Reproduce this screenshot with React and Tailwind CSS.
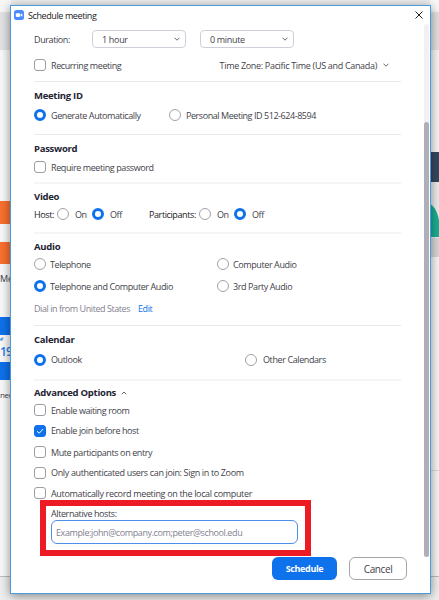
import React from "react";

const font = "font-['Open_Sans','Noto_Sans',sans-serif]";

function T({ className = "", children }) {
  return <span className={`whitespace-nowrap ${className}`}>{children}</span>;
}

function Line({ className = "h-px bg-[#e9e9ed]" }) {
  return <div className={`w-[367px] shrink-0 ${className}`} />;
}

function Row({ className = "", children }) {
  return <div className={`flex shrink-0 items-center ${className}`}>{children}</div>;
}

function Radio({ on, className = "" }) {
  return (
    <span
      className={`size-3 shrink-0 rounded-full bg-white ${
        on ? "border-[3px] border-[#0e72ed]" : "border border-[#a2a2a8]"
      } ${className}`}
    />
  );
}

function Check({ on }) {
  return (
    <span
      className={`flex size-3 shrink-0 items-center justify-center rounded-[3px] border ${
        on ? "border-[#0e72ed] bg-[#0e72ed]" : "border-[#9c9ca3] bg-white"
      }`}
    >
      {on && (
        <svg viewBox="0 0 10 10" className="size-[10px]" fill="none" stroke="white" strokeWidth="1">
          <path d="M2 5.2 4.2 7.2 8.2 3" />
        </svg>
      )}
    </span>
  );
}

function Chevron({ up }) {
  return (
    <svg viewBox="0 0 6 4" className="h-1 w-1.5 shrink-0" fill="none" stroke="#666672" strokeWidth="1">
      <path d={up ? "M.7 3.2 3 1 5.3 3.2" : "M.5.7 3 3.2 5.5.7"} />
    </svg>
  );
}

function Select({ label }) {
  return (
    <div className="flex h-[18px] w-[94px] items-center justify-between rounded-[4px] border border-[#cfcfdc] pr-[5px] pl-[9px]">
      <T className="tracking-[-0.32px]">{label}</T>
      <Chevron />
    </div>
  );
}

function Heading({ className, children }) {
  return (
    <div className={`flex shrink-0 items-center text-[9.5px] font-bold tracking-[-0.27px] text-[#232333] ${className}`}>
      <T>{children}</T>
    </div>
  );
}

function Backdrop() {
  return (
    <div className="h-[600px] w-[439px] bg-[#efefef] text-[#3c3c46]">
      <div className="flex h-[577px] justify-between border-b border-[#bdbdbd]">
        <div className="flex w-[11px] flex-col overflow-hidden bg-[#fafafa]">
          <div className="h-3 shrink-0 bg-[#f8f8f8]" />
          <div className="h-[38px] shrink-0 bg-[#e4e4e7]" />
          <div className="mt-[151px] h-[23px] shrink-0 bg-[#fa7130]" />
          <div className="mt-[18px] h-[22px] shrink-0 bg-[#fa7130]" />
          <div className="mt-[7px] h-4 shrink-0 text-[9px] leading-4">Me</div>
          <div className="mt-[30px] h-[18px] shrink-0 bg-[#0e72ed]" />
          <svg viewBox="0 0 11 8" className="-mt-px h-2 w-[11px] shrink-0" fill="none" stroke="#5aa0f4" strokeWidth="2">
            <path d="M0 5c1.500 1.500 2.500 .5 2.500-1.500" />
          </svg>
          <div className="mt-px h-[19px] shrink-0 text-[12px] leading-[17px] font-semibold tracking-[-0.8px] text-[#2a7fe6]">
            19
          </div>
          <div className="h-[18px] shrink-0 bg-[#0e72ed]" />
          <div className="mt-[7px] h-4 shrink-0 text-[8px] leading-4 tracking-[-0.3px]">ned</div>
        </div>
        <div className="flex w-[9px] flex-col bg-[#f6f6f6]">
          <div className="h-3 shrink-0 bg-[#f8f8f8]" />
          <div className="h-[38px] shrink-0 bg-[#e2e2e4]" />
          <div className="mt-[102px] h-[30px] shrink-0 bg-[#34495e]" />
          <svg viewBox="0 0 9 56" className="h-14 w-[9px] shrink-0">
            <path d="M0 0h9v56H0z" fill="#ececec" />
            <path d="M0 22c5 3 8 9 9 17v16H0z" fill="#1bae93" />
          </svg>
          <div className="h-[19px] shrink-0 bg-[#d8d8d8]" />
          <div className="mt-[213px] h-px shrink-0 bg-[#dadada]" />
        </div>
      </div>
    </div>
  );
}

export default function App() {
  return (
    <div className={`relative h-[600px] w-[439px] overflow-hidden ${font}`}>
      <Backdrop />
      <div className="absolute top-[5px] left-[10px] flex h-[589px] w-[421px] flex-col border border-[#4a9ade] bg-white text-[9px] leading-none tracking-[-0.4px] text-[#3f3f4a] shadow-[0_2px_10px_rgba(0,0,0,0.45)]">
        <div className="flex h-[18px] shrink-0 items-center pr-[7px] pl-[3px]">
          <svg viewBox="0 0 10 10" className="size-[10px]">
            <rect width="10" height="10" rx="2.5" fill="#4a8cff" />
            <rect x="1.8" y="3.2" width="4.3" height="3.7" rx=".8" fill="white" />
            <path d="m6.5 4.5 1.8-1.1v3.3L6.5 5.6z" fill="white" />
          </svg>
          <T className="ml-[4px] text-[#222]">Schedule meeting</T>
          <svg viewBox="0 0 8 8" className="ml-auto size-2" fill="none" stroke="#222" strokeWidth="1">
            <path d="m.5.5 7 7m0-7-7 7" />
          </svg>
        </div>
        <div className="flex h-[569px]">
          <div className="flex w-[413px] flex-col pl-[23px]">
            <Row className="h-[30px]">
              <T className="w-[58px]">Duration:</T>
              <Select label="1 hour" />
              <span className="w-[14px]" />
              <Select label="0 minute" />
            </Row>
            <Row className="h-[22px] w-[367px]">
              <Check />
              <T className="ml-[5px]">Recurring meeting</T>
              <T className="mr-[6px] ml-auto tracking-[-0.32px]">Time Zone: Pacific Time (US and Canada)</T>
              <Chevron />
              <span className="w-[12px]" />
            </Row>
            <Line className="mt-[5px] h-px bg-[#e9e9ed]" />
            <Heading className="mt-[6px] h-4">Meeting ID</Heading>
            <Row className="mt-px h-5">
              <Radio on />
              <T className="ml-[5px] w-[118px]">Generate Automatically</T>
              <Radio />
              <T className="ml-[5px] tracking-[-0.44px]">Personal Meeting ID 512-624-8594</T>
            </Row>
            <Line className="mt-[9px] h-px bg-[#e9e9ed]" />
            <Heading className="mt-[6px] h-4">Password</Heading>
            <Row className="h-5">
              <Check />
              <T className="ml-[5px]">Require meeting password</T>
            </Row>
            <Line className="mt-[5px] h-[2px] bg-[#f5f5f7]" />
            <Heading className="mt-[5px] h-4">Video</Heading>
            <Row className="h-[18px]">
              <T className="w-[23px] text-[#222]">Host:</T>
              <Radio />
              <T className="ml-[6px] w-[17px]">On</T>
              <Radio on />
              <T className="ml-[6px] w-[39px]">Off</T>
              <T className="w-[50px] text-[#222]">Participants:</T>
              <Radio />
              <T className="ml-[6px] w-[17px]">On</T>
              <Radio on />
              <T className="ml-[6px]">Off</T>
            </Row>
            <Line className="mt-[9px] h-[2px] bg-[#f5f5f7]" />
            <Heading className="mt-[5px] h-4">Audio</Heading>
            <Row className="h-[18px]">
              <Radio />
              <T className="ml-[4px] w-[167px]">Telephone</T>
              <Radio />
              <T className="ml-[4px]">Computer Audio</T>
            </Row>
            <Row className="mt-[3px] h-5">
              <Radio on />
              <T className="ml-[4px] w-[167px]">Telephone and Computer Audio</T>
              <Radio />
              <T className="ml-[4px]">3rd Party Audio</T>
            </Row>
            <Row className="mt-[3px] h-[18px]">
              <T className="w-[104px] tracking-[-0.44px] text-[#82828f]">Dial in from United States</T>
              <T className="text-[#0e72ed]">Edit</T>
            </Row>
            <Line className="mt-[8px] h-px bg-[#e9e9ed]" />
            <Heading className="mt-[6px] h-4">Calendar</Heading>
            <Row className="mt-[2px] h-[19px]">
              <Radio on />
              <T className="ml-[5px] w-[194px]">Outlook</T>
              <Radio />
              <T className="ml-[6px]">Other Calendars</T>
            </Row>
            <Line className="mt-[10px] h-[2px] bg-[#f5f5f7]" />
            <Row className="mt-[3px] h-[17px]">
              <Heading className="mr-[5px]">Advanced Options</Heading>
              <Chevron up />
            </Row>
            <Row className="h-[18px]">
              <Check />
              <T className="ml-[5px]">Enable waiting room</T>
            </Row>
            <Row className="mt-px h-[21px]">
              <Check on />
              <T className="ml-[5px]">Enable join before host</T>
            </Row>
            <Row className="mt-px h-5">
              <Check />
              <T className="ml-[5px]">Mute participants on entry</T>
            </Row>
            <Row className="h-[21px]">
              <Check />
              <T className="ml-[5px] tracking-[-0.35px]">Only authenticated users can join: Sign in to Zoom</T>
            </Row>
            <Row className="mt-[3px] h-[14px]">
              <Check />
              <T className="ml-[5px] tracking-[-0.34px]">Automatically record meeting on the local computer</T>
            </Row>
            <div className="ml-[6px] flex h-14 w-[271px] shrink-0 flex-col border-[6px] border-[#ed1c24] pl-[5px]">
              <Row className="h-[14px]">
                <T>Alternative hosts:</T>
              </Row>
              <div className="flex h-[24px] w-[247px] items-center rounded-[6px] border border-[#4a90e8] pl-[4px]">
                <T className="text-[#82828f]">Example:john@company.com;peter@school.edu</T>
              </div>
            </div>
            <div className="mt-px flex h-[23px] shrink-0 pl-[238px]">
              <button className="flex w-[65px] items-center justify-center rounded-[6px] bg-[#0e72ed] text-[9px] font-bold tracking-[-0.35px] text-white">
                <T>Schedule</T>
              </button>
              <button className="ml-[12px] flex w-[58px] items-center justify-center rounded-[6px] border border-[#a6a6aa] text-[10px]">
                <T>Cancel</T>
              </button>
            </div>
          </div>
          <div className="flex h-[533px] w-[5px] flex-col rounded-full bg-[#f1f1f5]">
            <div className="mt-[98px] h-[435px] rounded-full bg-[#afafb9]" />
          </div>
        </div>
      </div>
    </div>
  );
}
